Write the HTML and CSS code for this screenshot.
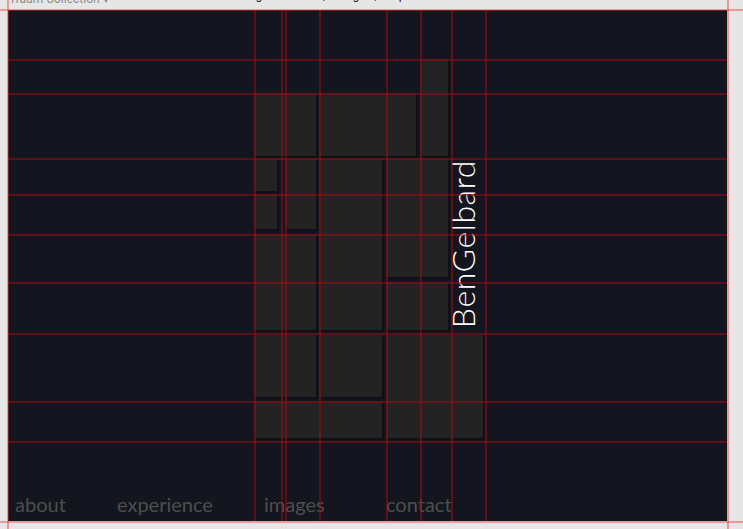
FILE: index.html
```html
<!DOCTYPE html>
<html lang="en">
<head>
<meta charset="utf-8">
<title>Ben Gelbard</title>
<link rel="stylesheet" href="styles.css">
</head>
<body>
<header class="topbar">
  <span class="brand">Traum Collection ▾</span>
  <span class="crumbs">
    <span class="crumb c1">Branding</span>
    <span class="crumb c2">|</span>
    <span class="crumb c3">Design</span>
    <span class="crumb c4">|</span>
    <span class="crumb c5">p</span>
  </span>
</header>
<main class="panel">
  <div class="blk b1"></div>
  <div class="blk b2"></div>
  <div class="blk b3"></div>
  <div class="blk b4"></div>
  <div class="blk b5"></div>
  <div class="blk b6"></div>
  <div class="blk b7"></div>
  <div class="blk b8"></div>
  <div class="blk b9"></div>
  <div class="blk b10"></div>
  <div class="blk b11"></div>
  <div class="blk b12"></div>
  <div class="blk b13"></div>
  <div class="blk b14"></div>
  <div class="name"><span>BenGelbard</span></div>
  <nav class="nav">
    <a class="nav-item w-about">about</a>
    <a class="nav-item w-exp">experience</a>
    <a class="nav-item w-img">images</a>
    <a class="nav-item">contact</a>
  </nav>
  <div class="vgrid">
    <div></div><div></div><div></div><div></div><div></div><div></div><div></div><div></div><div></div>
  </div>
  <div class="hgrid">
    <div></div><div></div><div></div><div></div><div></div><div></div><div></div><div></div><div></div><div></div>
  </div>
</main>
<div class="guide g-top"></div>
<div class="guide g-bottom"></div>
<div class="guide g-left"></div>
<div class="guide g-right"></div>
</body>
</html>
```

FILE: styles.css
```css
html, body {
  margin: 0;
  padding: 0;
}

body {
  background: #e6e6e6;
  font-family: Lato, "Open Sans", "DejaVu Sans", sans-serif;
  width: 743px;
  height: 529px;
  overflow: hidden;
  position: relative;
}

.topbar {
  height: 10px;
  overflow: hidden;
  display: flex;
  align-items: flex-start;
  font-family: Roboto, "Liberation Sans", sans-serif;
  font-size: 12px;
  line-height: 12px;
  color: #8c8c8c;
  padding-left: 9px;
}

.brand {
  margin-top: -7px;
  white-space: nowrap;
}

.crumbs {
  display: flex;
  margin-top: -11px;
  white-space: nowrap;
  color: #222;
}

.c1 { margin-left: 106px; }
.c2 { margin-left: 60px; }
.c3 { margin-left: 4px; }
.c4 { margin-left: 8px; }
.c5 { margin-left: 22px; }

.panel {
  position: relative;
  margin-left: 8px;
  width: 719px;
  height: 511px;
  background: #13161e;
  display: grid;
  grid-template-columns: 246px 27px 4px 34px 67px 34px 31px 34px 242px;
  grid-template-rows: 49px 34px 65px 36px 40px 48px 51px 68px 40px 80px;
}

.blk {
  background: #232323;
  box-shadow: 2px 2px 1px rgba(0, 0, 0, 0.25);
}

.b1 { grid-column: 7 / 8; grid-row: 2 / 4; margin: 0 3px 2px 0; }
.b2 { grid-column: 2 / 5; grid-row: 3 / 4; margin: 0 3px 2px 0; }
.b3 { grid-column: 5 / 7; grid-row: 3 / 4; margin: 0 4px 2px 0; }
.b4 { grid-column: 2 / 3; grid-row: 4 / 5; margin: 1px 4px 3px 0; }
.b5 { grid-column: 2 / 3; grid-row: 5 / 6; margin: 1px 4px 5px 0; }
.b6 { grid-column: 4 / 5; grid-row: 4 / 6; margin: 1px 3px 5px 0; }
.b7 { grid-column: 5 / 6; grid-row: 4 / 8; margin: 1px 4px 3px 0; }
.b8 { grid-column: 6 / 8; grid-row: 4 / 7; margin: 1px 3px 5px 0; }
.b9 { grid-column: 2 / 5; grid-row: 6 / 8; margin: 0 3px 3px 0; }
.b10 { grid-column: 6 / 8; grid-row: 7 / 8; margin: 0 3px 3px 0; }
.b11 { grid-column: 2 / 5; grid-row: 8 / 9; margin: 2px 3px 4px 0; }
.b12 { grid-column: 5 / 6; grid-row: 8 / 9; margin: 2px 4px 4px 0; }
.b13 { grid-column: 6 / 9; grid-row: 8 / 10; margin: 2px 2px 3px 0; }
.b14 { grid-column: 2 / 6; grid-row: 9 / 10; margin: 1px 4px 3px 0; }

.name {
  grid-column: 8 / 9;
  grid-row: 4 / 8;
  display: flex;
  align-items: flex-end;
  padding-bottom: 5px;
}

.name span {
  writing-mode: vertical-rl;
  transform: rotate(180deg);
  font-family: Lato, "Open Sans", sans-serif;
  font-weight: 300;
  font-size: 32px;
  letter-spacing: 0.6px;
  line-height: 24px;
  color: #ffffff;
  white-space: nowrap;
}

.nav {
  grid-column: 1 / -1;
  grid-row: 10 / 11;
  align-self: end;
  display: flex;
  padding: 0 0 7px 7px;
}

.nav-item {
  font-size: 20px;
  line-height: 20px;
  color: #4e4e4e;
  font-weight: 400;
  white-space: nowrap;
}

.w-about { width: 102px; }
.w-exp { width: 147px; }
.w-img { width: 122px; }

/* red layout grid overlay */
.vgrid,
.hgrid {
  position: absolute;
  top: 0;
  left: 0;
  width: 719px;
  height: 511px;
  display: grid;
  pointer-events: none;
}

.vgrid {
  grid-template-columns: 246px 27px 4px 34px 67px 34px 31px 34px 242px;
}

.hgrid {
  grid-template-rows: 49px 34px 65px 36px 40px 48px 51px 68px 40px 80px;
}

.vgrid > div + div {
  border-left: 2px solid rgba(170, 10, 20, 0.5);
}

.hgrid > div + div {
  border-top: 2px solid rgba(170, 10, 20, 0.5);
}

/* page guides */
.guide {
  position: absolute;
  background: rgba(240, 50, 50, 0.42);
  pointer-events: none;
}

.g-top { left: 0; top: 9px; width: 743px; height: 2px; }
.g-bottom { left: 0; top: 521px; width: 743px; height: 2px; }
.g-left { left: 7px; top: 0; width: 2px; height: 529px; }
.g-right { left: 727px; top: 0; width: 2px; height: 529px; }
```
